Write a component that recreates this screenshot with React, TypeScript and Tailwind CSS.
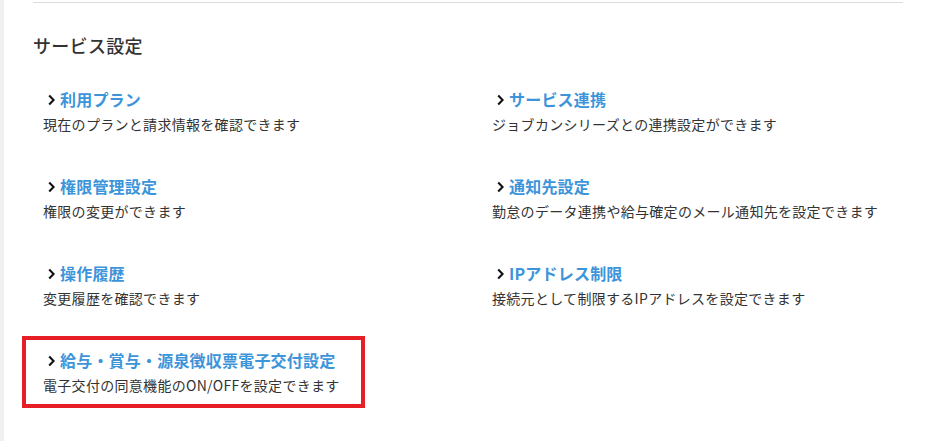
const items = [
  { title: "利用プラン", desc: "現在のプランと請求情報を確認できます" },
  { title: "サービス連携", desc: "ジョブカンシリーズとの連携設定ができます" },
  { title: "権限管理設定", desc: "権限の変更ができます" },
  { title: "通知先設定", desc: "勤怠のデータ連携や給与確定のメール通知先を設定できます" },
  { title: "操作履歴", desc: "変更履歴を確認できます" },
  { title: "IPアドレス制限", desc: "接続元として制限するIPアドレスを設定できます" },
  { title: "給与・賞与・源泉徴収票電子交付設定", desc: "電子交付の同意機能のON/OFFを設定できます", marked: true },
]

function Chevron() {
  return (
    <svg width="7" height="12" viewBox="0 0 7 12" className="mt-[2px] shrink-0">
      <polyline points="1.2,1.5 5.6,6 1.2,10.5" fill="none" stroke="#111" strokeWidth="2.1" />
    </svg>
  )
}

function SettingItem({ title, desc, marked }: { title: string; desc: string; marked?: boolean }) {
  return (
    <div className="relative">
      <a href="#" className="flex items-center gap-[5px] pl-[5px] text-[16px] font-bold leading-[24px] tracking-[0.2px] text-[#3c95da]">
        <Chevron />
        <span>{title}</span>
      </a>
      <p className="mt-[3px] text-[14px] leading-[21px] tracking-[0.3px] text-[#333]">{desc}</p>
      {marked && (
        <div className="pointer-events-none absolute -left-[21px] -top-[12px] h-[72px] w-[343px] border-[4px] border-[#e61f26]" />
      )}
    </div>
  )
}

export default function App() {
  return (
    <div
      className="flex h-[441px] w-[931px] overflow-hidden bg-white"
      style={{ fontFamily: '"Noto Sans CJK JP", "Noto Sans", sans-serif' }}
    >
      <div className="w-[4px] shrink-0 bg-[#f0f0f0]" />
      <div className="flex-1 pl-[29px] pr-[28px] pt-[2px]">
        <div className="border-t border-[#dcdcdc]" />
        <h2 className="mt-[29px] text-[18px] font-medium leading-[27px] tracking-[0.3px] text-[#333]">サービス設定</h2>
        <div className="mt-[28px] grid grid-cols-[449px_1fr] gap-y-[39px] pl-[10px]">
          {items.map((it) => (
            <SettingItem key={it.title} {...it} />
          ))}
        </div>
      </div>
    </div>
  )
}
